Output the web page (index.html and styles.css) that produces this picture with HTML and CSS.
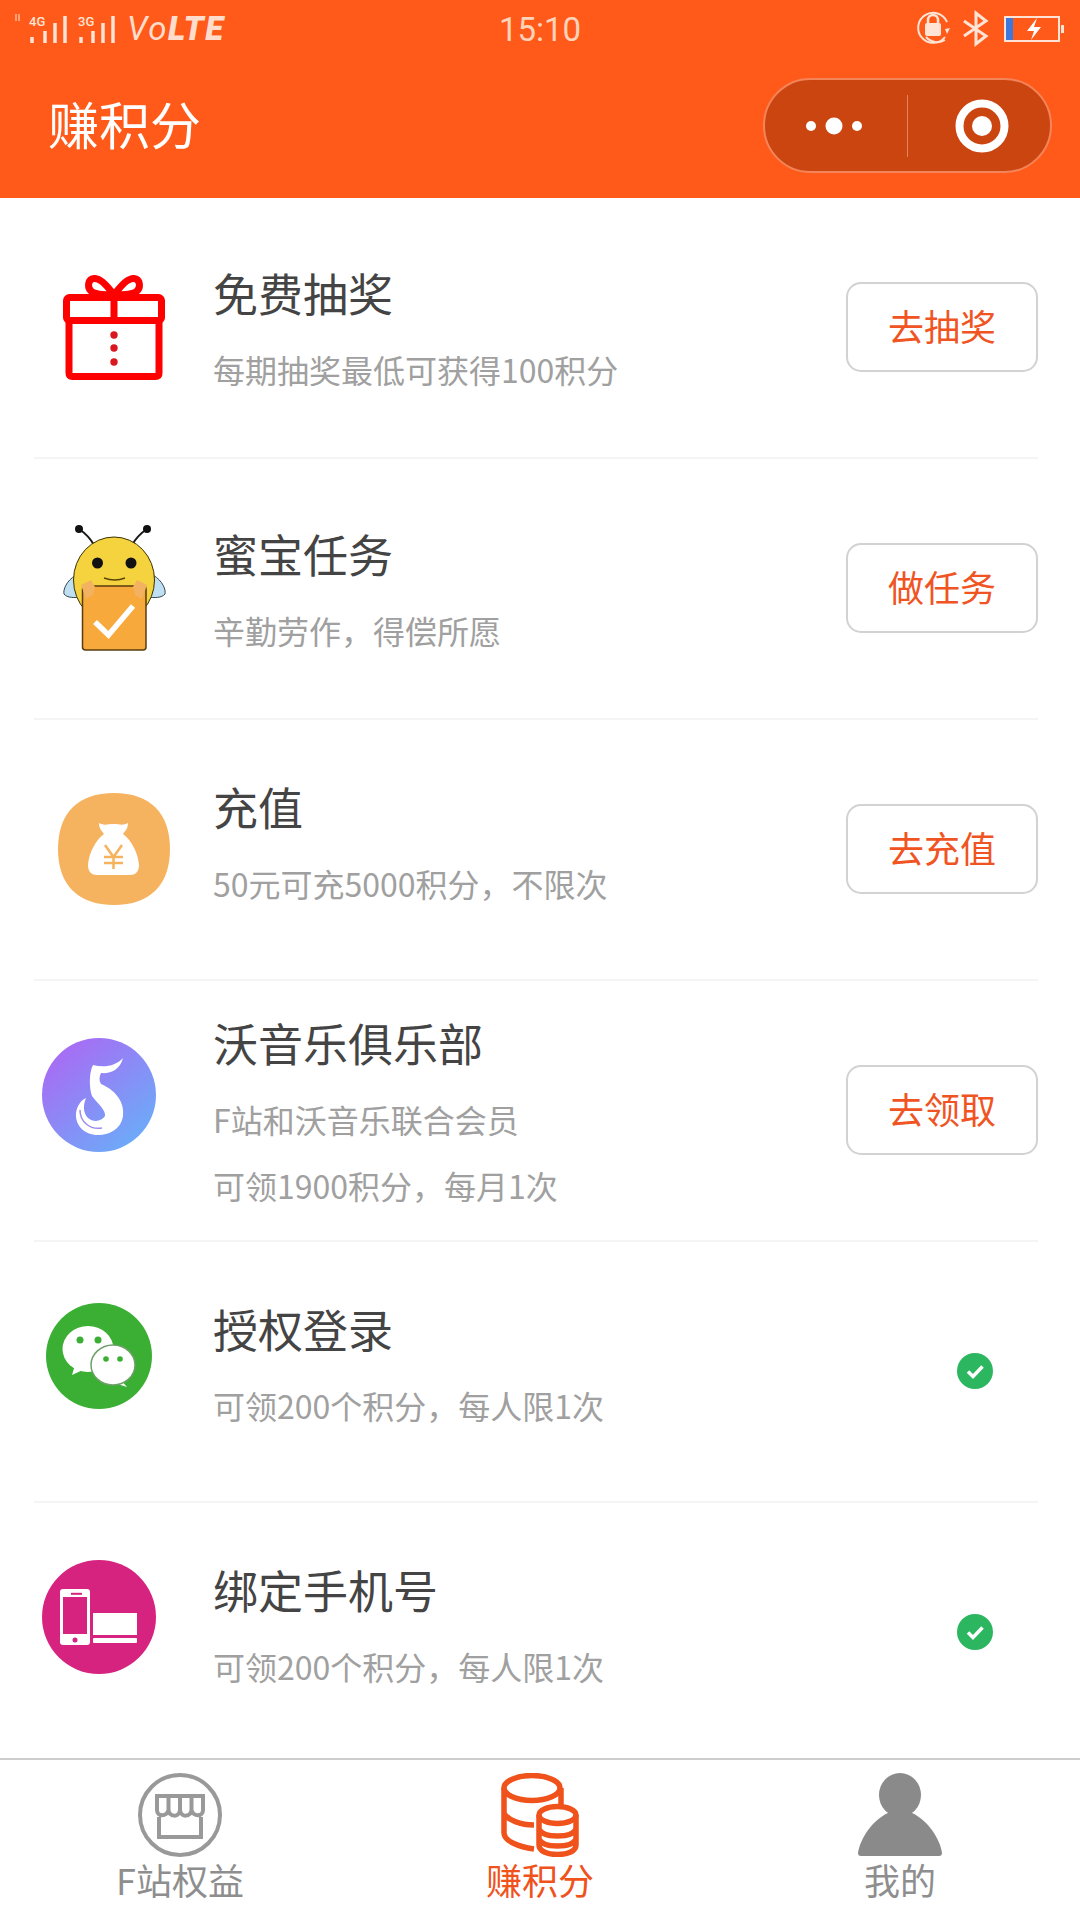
FILE: index.html
```html
<!DOCTYPE html>
<html lang="zh-CN">
<head>
<meta charset="utf-8">
<title>赚积分</title>
<link rel="stylesheet" href="styles.css">
</head>
<body>
<div class="page">
  <header class="header">
    <div class="status">
      <div class="status-left">
        <svg class="signal" width="106" height="55" viewBox="0 0 106 55">
          <path d="M2 19v-7M5 19v-7" stroke="#ffb796" stroke-width="1.500"/>
          <text x="15" y="24" class="tiny">4G</text>
          <text x="64" y="24" class="tiny">3G</text>
          <path d="M18 35v6M31 29v12M41 21v20M51 14v27M67 35v6M79 29v12M89 21v20M99 14v27" stroke="#ffe3d5" stroke-width="3.500"/>
        </svg>
        <span class="volte">Vo<b>LTE</b></span>
      </div>
      <div class="time">15:10</div>
      <svg class="status-right" width="164" height="55" viewBox="0 0 164 55">
        <path d="M29 35A15 15 0 1 1 31 20" fill="none" stroke="#ffe3d5" stroke-width="2"/>
        <path d="M10 35a15 15 0 0 0 19 3" fill="none" stroke="#ffe3d5" stroke-width="2"/>
        <path d="M29 27l5-1-3 6z" fill="#ffe3d5"/>
        <rect x="9" y="21" width="16" height="13" rx="2" fill="#ffe3d5"/>
        <path d="M12 21v-3a5 5 0 0 1 10 0v3" fill="none" stroke="#ffe3d5" stroke-width="2.500"/>
        <path d="M48 19l22 15-10 8V11l10 8-22 15" fill="none" stroke="#ffe3d5" stroke-width="3"/>
        <rect x="89" y="15" width="54" height="24" fill="none" stroke="#ffe3d5" stroke-width="2"/>
        <rect x="90" y="16" width="7" height="22" fill="#3f78dc"/>
        <path d="M121 16l-10 13h7l-3 9 10-13h-7z" fill="#fff"/>
        <rect x="145" y="23" width="3" height="8" fill="#ffe3d5"/>
      </svg>
    </div>
    <div class="nav">
      <h1 class="nav-title">赚积分</h1>
      <div class="capsule">
        <div class="capsule-part capsule-more">
          <svg width="56" height="20" viewBox="0 0 56 20">
            <circle cx="5" cy="10" r="5" fill="#fff"/>
            <circle cx="28" cy="10" r="8.500" fill="#fff"/>
            <circle cx="51" cy="10" r="5" fill="#fff"/>
          </svg>
        </div>
        <div class="capsule-line"></div>
        <div class="capsule-part capsule-close">
          <svg width="54" height="54" viewBox="0 0 54 54">
            <circle cx="27" cy="27" r="22.500" fill="none" stroke="#fff" stroke-width="8"/>
            <circle cx="27" cy="27" r="10" fill="#fff"/>
          </svg>
        </div>
      </div>
    </div>
  </header>

  <main class="list">
    <section class="row">
      <div class="slot">
        <svg width="102" height="105" viewBox="0 0 102 105">
          <g fill="none" stroke="#f00" stroke-width="7">
            <path d="M51 20C43 9 36 3 31 3.500C25 4 24 12 28 16C32 20 42 20 51 20C60 20 70 20 74 16C78 12 77 4 71 3.500C66 3 59 9 51 20" />
            <rect x="3.500" y="22.500" width="95" height="23" rx="3"/>
            <path d="M6 46V98Q6 101.500 9.500 101.500H92.500Q96 101.500 96 98V46M51 20V46"/>
          </g>
          <g fill="#d8171f"><circle cx="51" cy="60" r="3.700"/><circle cx="51" cy="73" r="3.700"/><circle cx="51" cy="87" r="3.700"/></g>
        </svg>
      </div>
      <div class="text text-shift">
        <div class="name">免费抽奖</div>
        <div class="sub sub-first">每期抽奖最低可获得100积分</div>
      </div>
      <button class="btn">去抽奖</button>
    </section>

    <section class="row">
      <div class="slot">
        <svg width="103" height="127" viewBox="0 0 103 127">
          <path d="M16 4C22 8 27 13 31 20M84 4C78 8 73 13 69 20" fill="none" stroke="#1a1a1a" stroke-width="2"/>
          <circle cx="16" cy="4" r="4" fill="#111"/><circle cx="84" cy="4" r="4" fill="#111"/>
          <path d="M13 50C3 56 0 65 1 69C4 73 12 73 18 72ZM90 50C100 56 103 65 102 69C99 73 91 73 85 72Z" fill="#bfe0f2" stroke="#35454e"/>
          <ellipse cx="51" cy="55" rx="40.500" ry="43" fill="#f5d33f" stroke="#3a3000"/>
          <circle cx="34.500" cy="38" r="5.500" fill="#111"/><circle cx="68" cy="38" r="5.500" fill="#111"/>
          <path d="M41 53Q52 57 62 53" fill="none" stroke="#5a4500" stroke-width="1.500"/>
          <rect x="19.500" y="61" width="63.500" height="64" rx="3" fill="#f7a93c" stroke="#5a3c10" stroke-width="1.500"/>
          <path d="M18 60L28 55L32 62L30 70L23 74ZM84 60L74 55L70 62L72 70L79 74Z" fill="#f2b25f"/>
          <path d="M32 97L45.500 110L70 81" fill="none" stroke="#fff" stroke-width="5.500"/>
        </svg>
      </div>
      <div class="text text-shift">
        <div class="name">蜜宝任务</div>
        <div class="sub sub-first">辛勤劳作，得偿所愿</div>
      </div>
      <button class="btn">做任务</button>
    </section>

    <section class="row">
      <div class="slot slot-raised">
        <svg width="112" height="112" viewBox="0 0 112 112">
          <path d="M56 0C92 0 112 20 112 56C112 92 92 112 56 112C20 112 0 92 0 56C0 20 20 0 56 0Z" fill="#f6b35f"/>
          <path d="M41 30C46 33 50 31 55.500 31C61 31 65 33 70 30C70 36 67 38 65 41C74 48 80 60 81 72C81 79 77 82 72 82H39C34 82 30 79 30 72C31 60 37 48 46 41C44 38 41 36 41 30Z" fill="#fff"/>
          <path d="M47 52L55.500 64L64 52M55.500 64V76M46 64H65M46 70H65" fill="none" stroke="#f6b35f" stroke-width="2.500"/>
        </svg>
      </div>
      <div class="text">
        <div class="name">充值</div>
        <div class="sub sub-first">50元可充5000积分，不限次</div>
      </div>
      <button class="btn">去充值</button>
    </section>

    <section class="row">
      <div class="slot slot-low">
        <svg width="114" height="114" viewBox="0 0 114 114">
          <defs>
            <linearGradient id="wo" x1="0.150" y1="0.100" x2="0.850" y2="0.900">
              <stop offset="0" stop-color="#a86cf4"/>
              <stop offset="1" stop-color="#6cabf8"/>
            </linearGradient>
          </defs>
          <circle cx="57" cy="57" r="57" fill="url(#wo)"/>
          <path d="M81 20C78 32 68 36 59 35C57 39 57 43 59 46C71 51 83 62 81 78C79 92 66 97 56 97C42 97 33 87 34 75C35 68 39 62 44 60C41 67 41 75 46 80C52 85 60 83 63 78C64 72 56 66 50 58C47 50 47 34 51 27C62 30 74 28 81 20Z" fill="#fff"/>
          <path d="M38 72C38 84 48 92 60 90" fill="none" stroke="#9c8cf0" stroke-width="1.500"/>
        </svg>
      </div>
      <div class="text text-shift">
        <div class="name">沃音乐俱乐部</div>
        <div class="sub sub-first">F站和沃音乐联合会员</div>
        <div class="sub">可领1900积分，每月1次</div>
      </div>
      <button class="btn">去领取</button>
    </section>

    <section class="row">
      <div class="slot slot-low">
        <svg width="106" height="106" viewBox="0 0 106 106">
          <circle cx="53" cy="53" r="53" fill="#3baf34"/>
          <path d="M29 62L26 72L39 66Z" fill="#fff"/>
          <ellipse cx="42" cy="46" rx="25.500" ry="23" fill="#fff"/>
          <circle cx="34" cy="37" r="3.500" fill="#3baf34"/><circle cx="52" cy="37" r="3.500" fill="#3baf34"/>
          <path d="M74 76L81 84L68 80Z" fill="#fff"/>
          <ellipse cx="67" cy="62" rx="22" ry="20" fill="#fff" stroke="#6d9f68" stroke-width="1.500"/>
          <circle cx="60" cy="56" r="2.800" fill="#3baf34"/><circle cx="74" cy="56" r="2.800" fill="#3baf34"/>
        </svg>
      </div>
      <div class="text">
        <div class="name">授权登录</div>
        <div class="sub sub-first">可领200个积分，每人限1次</div>
      </div>
      <svg class="check" width="36" height="36" viewBox="0 0 36 36">
        <circle cx="18" cy="18" r="18" fill="#2cb660"/>
        <path d="M11 18.500L16 23.500L25.500 13.500" fill="none" stroke="#fff" stroke-width="3.500"/>
      </svg>
    </section>

    <section class="row">
      <div class="slot slot-low">
        <svg width="114" height="114" viewBox="0 0 114 114">
          <circle cx="57" cy="57" r="57" fill="#d6237f"/>
          <rect x="18" y="29" width="30" height="56" rx="3" fill="#fff"/>
          <rect x="21" y="37" width="24" height="37" fill="#d6237f"/>
          <path d="M29 33.800H40" stroke="#d6237f" stroke-width="2"/>
          <circle cx="33" cy="80" r="2.500" fill="#d6237f"/>
          <rect x="51" y="53" width="44" height="22" fill="#fff"/>
          <rect x="51" y="78" width="44" height="5" rx="1" fill="#fff"/>
        </svg>
      </div>
      <div class="text">
        <div class="name">绑定手机号</div>
        <div class="sub sub-first">可领200个积分，每人限1次</div>
      </div>
      <svg class="check" width="36" height="36" viewBox="0 0 36 36">
        <circle cx="18" cy="18" r="18" fill="#2cb660"/>
        <path d="M11 18.500L16 23.500L25.500 13.500" fill="none" stroke="#fff" stroke-width="3.500"/>
      </svg>
    </section>
  </main>

  <nav class="tabbar">
    <div class="tab">
      <svg width="84" height="84" viewBox="0 0 84 84">
        <g fill="none" stroke="#999" stroke-width="4">
          <circle cx="42" cy="42" r="40"/>
          <path d="M19 23H65V37C65 44 55 44 53.500 37C53 44 43 45 42 37C41 45 31 44 30.500 37C29 44 19 44 19 37ZM30.500 24V37M42 24V37M53.500 24V37M21 44V64H63V44"/>
        </g>
      </svg>
      <span class="tab-label">F站权益</span>
    </div>
    <div class="tab tab-active">
      <svg width="78" height="84" viewBox="0 0 78 84">
        <g fill="none" stroke="#f0521c" stroke-width="5.500">
          <ellipse cx="31" cy="15" rx="28" ry="12.500"/>
          <path d="M3 15V60C3 68 18 74 33 76M60 15V32M3 40C6 47 20 52 33 52"/>
          <ellipse cx="56.500" cy="42" rx="18.500" ry="8.500"/>
          <path d="M38 42V72C38 78 46 81.500 56.500 81.500C67 81.500 75 78 75 72V42M38 56C40 61 48 63 56.500 63C65 63 73 61 75 56M38 66C40 71 48 73 56.500 73C65 73 73 71 75 66"/>
        </g>
      </svg>
      <span class="tab-label">赚积分</span>
    </div>
    <div class="tab">
      <svg width="84" height="84" viewBox="0 0 84 84">
        <ellipse cx="42" cy="22" rx="21" ry="22" fill="#8a8a8a"/>
        <path d="M34 38C14 46 2 66 0 80Q0 83 3 83H81Q84 83 84 80C82 66 70 46 50 38Z" fill="#8a8a8a"/>
      </svg>
      <span class="tab-label">我的</span>
    </div>
  </nav>
</div>
</body>
</html>
```

FILE: styles.css
```css
* { box-sizing: border-box; }
html, body { margin: 0; padding: 0; }
body {
  width: 1080px;
  height: 1920px;
  background: #fff;
  font-family: "Noto Sans CJK SC", "Noto Sans", sans-serif;
  overflow: hidden;
}
.page {
  display: flex;
  flex-direction: column;
  height: 1920px;
}
.header {
  flex: none;
  height: 198px;
  background: #ff5a19;
}
.status {
  display: grid;
  grid-template-columns: 1fr auto 1fr;
  align-items: center;
  height: 55px;
}
.status-left {
  display: flex;
  align-items: center;
  gap: 7px;
  padding-left: 14px;
}
.signal { display: block; }
.tiny {
  font-family: "Roboto", sans-serif;
  font-size: 13px;
  font-weight: 500;
  fill: #ffe3d5;
}
.volte {
  font-family: "Roboto", sans-serif;
  font-size: 33px;
  font-style: italic;
  color: #ffdccb;
  line-height: 58px;
  letter-spacing: 1.5px;
}
.volte b { font-weight: 900; }
.time {
  font-family: "Roboto", sans-serif;
  font-size: 33px;
  color: #ffd2ba;
  line-height: 57px;
}
.status-right {
  display: block;
  justify-self: end;
}
.nav {
  display: flex;
  align-items: center;
  justify-content: space-between;
  height: 143px;
  padding: 0 28px 2px 48px;
}
.nav-title {
  margin: 0 0 6px;
  font-size: 51px;
  font-weight: 400;
  color: #fff;
  line-height: 70px;
}
.capsule {
  display: flex;
  align-items: center;
  width: 289px;
  height: 95px;
  border: 2px solid #f4855a;
  border-radius: 48px;
  background: #cb4511;
}
.capsule-part {
  display: flex;
  align-items: center;
  justify-content: center;
}
.capsule-part svg { display: block; }
.capsule-more {
  flex: none;
  width: 142px;
  padding-right: 4px;
}
.capsule-close {
  flex: 1;
  padding-left: 6px;
}
.capsule-line {
  flex: none;
  width: 1px;
  height: 62px;
  background: #e2845c;
}
.list {
  flex: 1;
  min-height: 0;
  overflow: hidden;
}
.row {
  display: flex;
  align-items: center;
  height: 261px;
  margin: 0 42px 0 34px;
  border-bottom: 2px solid #f4f4f4;
}
.slot {
  flex: none;
  display: flex;
  justify-content: center;
  width: 160px;
  margin-right: 19px;
}
.slot svg { display: block; }
.slot-raised { margin-bottom: 2px; }
.slot-low {
  width: 130px;
  margin-right: 49px;
  margin-bottom: 32px;
}
.text {
  flex: 1;
  min-width: 0;
  padding-bottom: 6px;
}
.text-shift { padding-top: 16px; }
.name {
  font-size: 45px;
  line-height: 60px;
  color: #444;
}
.sub {
  font-size: 32px;
  line-height: 66px;
  color: #a0a0a0;
}
.sub-first { margin-top: 13px; }
.btn {
  flex: none;
  width: 192px;
  height: 90px;
  margin-bottom: 2px;
  padding: 0 0 3px;
  background: #fff;
  border: 2px solid #d2d2d2;
  border-radius: 15px;
  color: #f05423;
  font-family: inherit;
  font-size: 36px;
}
.check {
  flex: none;
  display: block;
  margin-right: 45px;
  margin-bottom: 2px;
}
.tabbar {
  flex: none;
  display: grid;
  grid-template-columns: repeat(3, 1fr);
  height: 162px;
  padding-top: 13px;
  background: #fff;
  border-top: 2px solid #cdcdcd;
}
.tab {
  display: flex;
  flex-direction: column;
  align-items: center;
  color: #8e8e8e;
}
.tab svg { display: block; flex: none; }
.tab-label {
  font-size: 36px;
  line-height: 44px;
}
.tab-active { color: #f0521c; }
```
